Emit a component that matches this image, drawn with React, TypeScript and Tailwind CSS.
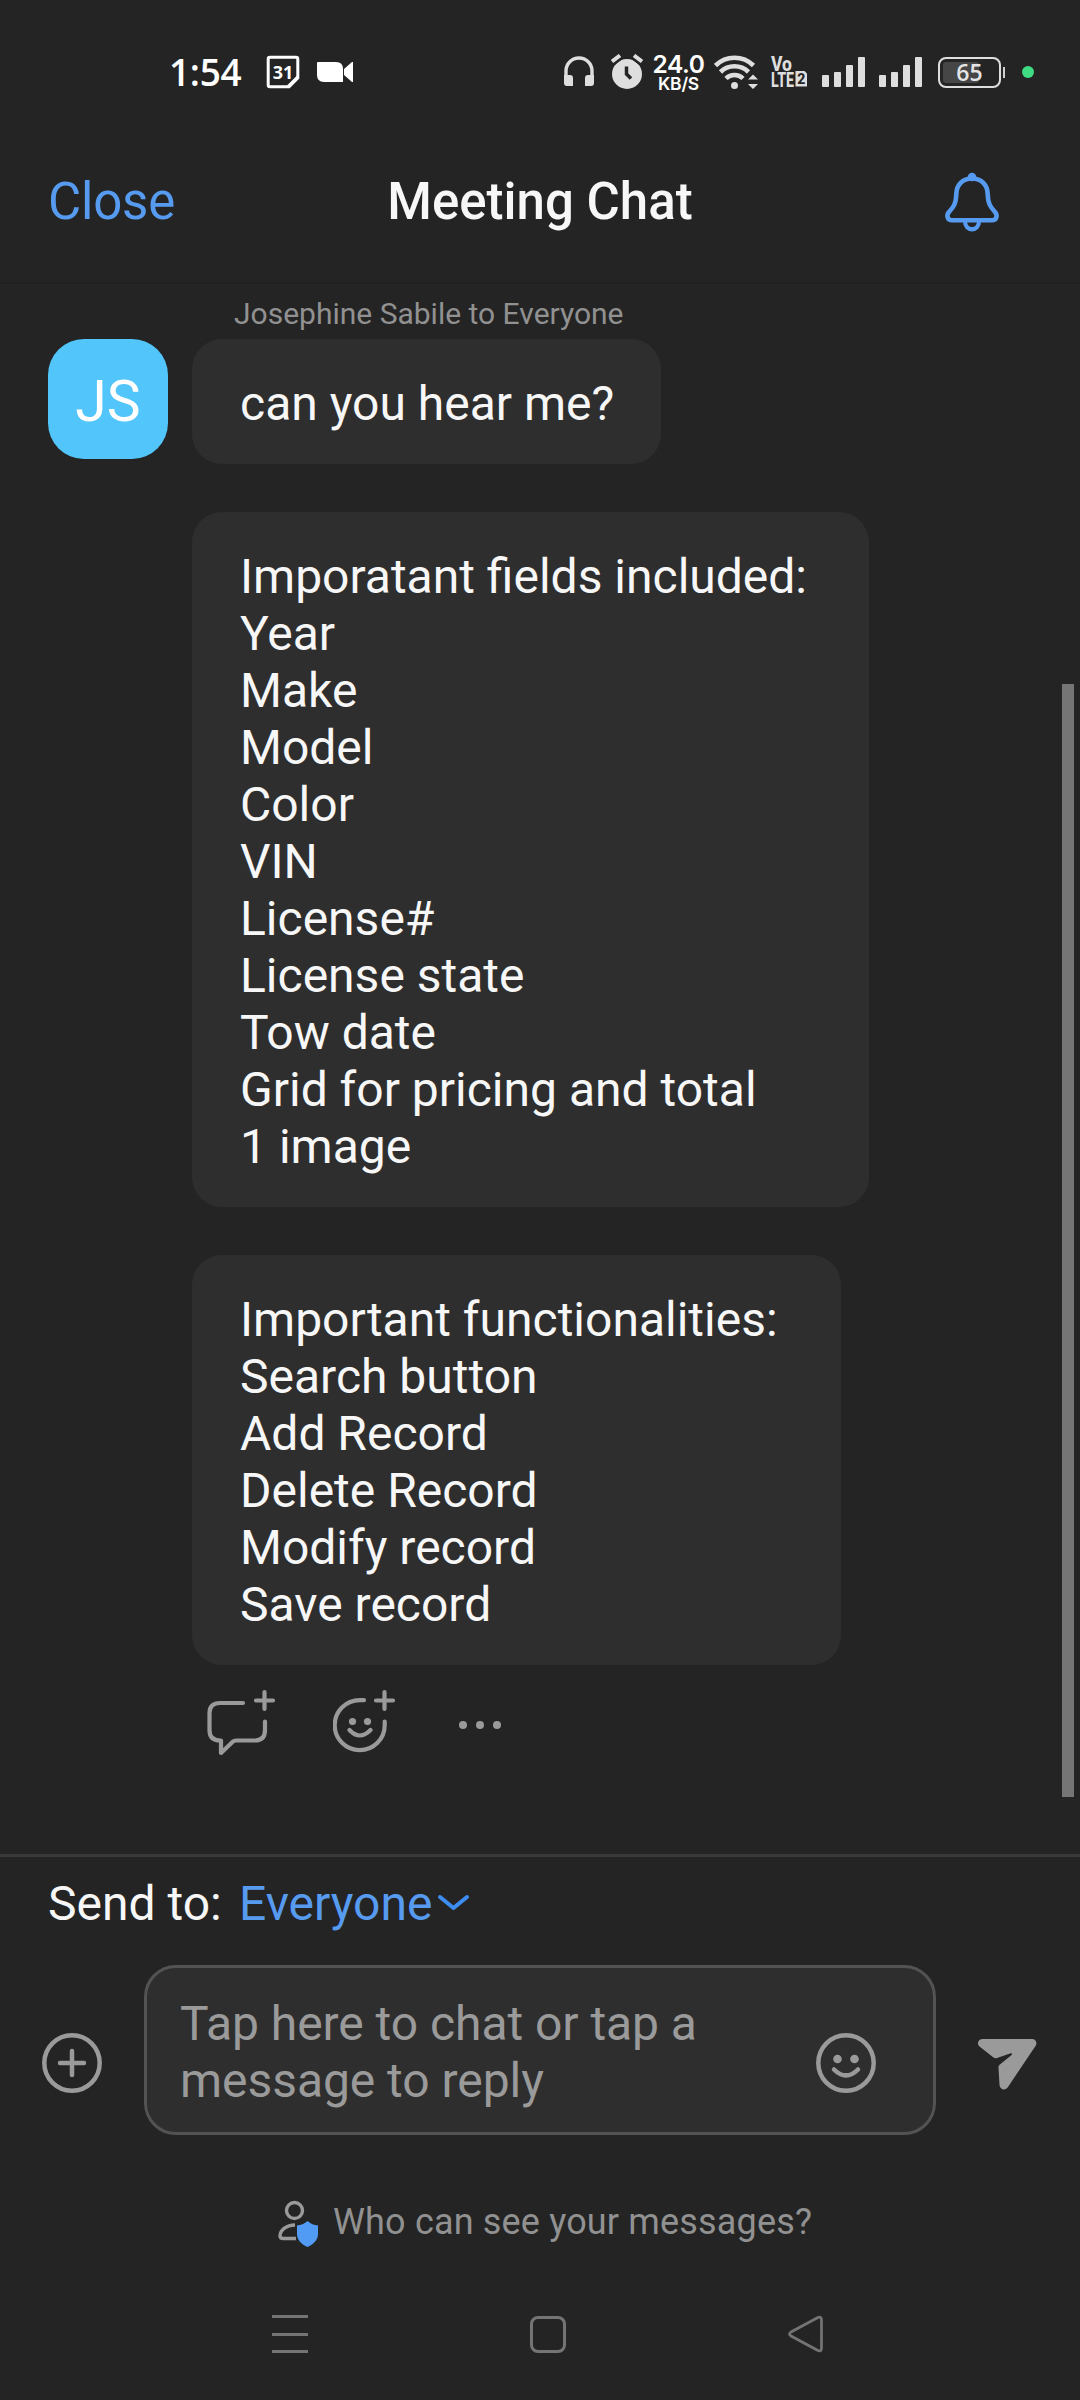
import React from "react";

const TEXT = "font-['Roboto',sans-serif]";

function Bubble({ lines, className }: { lines: string[]; className: string }) {
  return (
    <div className={`rounded-[30px] bg-[#2e2e2e] pl-12 pt-9 text-[48px] leading-[57px] text-[#f7f7f7] ${className}`}>
      {lines.map((l) => (
        <div key={l} className="whitespace-nowrap">{l}</div>
      ))}
    </div>
  );
}

function Signal({ className }: { className: string }) {
  return (
    <div className={`flex h-[30px] w-[43px] items-end justify-between ${className}`}>
      <div className="h-3 w-[7px] rounded-[1px] bg-[#dedede]" />
      <div className="h-[15px] w-[7px] rounded-[1px] bg-[#dedede]" />
      <div className="h-[22px] w-[7px] rounded-[1px] bg-[#dedede]" />
      <div className="h-[30px] w-[7px] rounded-[1px] bg-[#dedede]" />
    </div>
  );
}

function StatusBar() {
  return (
    <header className="flex h-[144px] items-center">
      <div className="ml-[169px] w-[97px] whitespace-nowrap font-['Open_Sans',sans-serif] text-[37px] font-semibold leading-[44px] tracking-[-0.3px] text-white">1:54</div>
      <svg width="34" height="34" viewBox="0 0 34 34" className="shrink-0">
        <path d="M4 2.2H30Q31.8 2.2 31.8 4V23L23 31.8H4Q2.2 31.8 2.2 30V4Q2.2 2.2 4 2.2Z" fill="none" stroke="#fff" strokeWidth="3" />
        <path d="M32 22L22 32" stroke="#fff" strokeWidth="3.5" />
        <text x="17" y="23.500" textAnchor="middle" fontFamily="Open Sans" fontWeight="700" fontSize="18" fill="#fff">31</text>
      </svg>
      <svg width="38" height="22" viewBox="0 0 38 22" className="ml-[16px] shrink-0">
        <path d="M2 1H20Q27 1 27 8V21H8Q1 21 1 14V2Q1 1 2 1ZM28 8L36 1H37V21H36L28 14Z" fill="#fff" />
      </svg>
      <svg width="30" height="32" viewBox="0 0 30 32" className="ml-[210px] shrink-0">
        <path d="M2 22V15A13 13 0 0 1 28 15V22" fill="none" stroke="#dedede" strokeWidth="3.4" />
        <path d="M0 19H6Q9 19 9 22V30H3Q0 30 0 27ZM30 19H24Q21 19 21 22V30H27Q30 30 30 27Z" fill="#dedede" />
      </svg>
      <svg width="32" height="36" viewBox="0 0 32 36" className="ml-[17px] shrink-0">
        <circle cx="16" cy="20" r="15" fill="#dedede" />
        <path d="M1 8L9 2M31 8L23 2" stroke="#242424" strokeWidth="8" />
        <path d="M1 7.500L9 1.500M31 7.500L23 1.500" stroke="#dedede" strokeWidth="4" />
        <path d="M15.500 12.500V20L20 24.500" stroke="#242424" strokeWidth="3.500" fill="none" />
      </svg>
      <div className="ml-[9px] mt-[2px] flex w-[53px] flex-col items-center whitespace-nowrap font-['Inter',sans-serif] text-white">
        <div className="text-[24.5px] font-semibold leading-[22px] tracking-[-0.4px]">24.0</div>
        <div className="text-[17.5px] font-semibold leading-[18px] tracking-[-0.2px]">KB/S</div>
      </div>
      <svg width="46" height="36" viewBox="0 0 46 36" className="ml-[9px] shrink-0">
        <g fill="none" stroke="#dedede" strokeWidth="4.600">
          <path d="M1.500 11.500A27 27 0 0 1 39.500 11.500" />
          <path d="M6.500 18A20 20 0 0 1 34.500 18" />
          <path d="M12 24.500A12 12 0 0 1 29 24.500" />
        </g>
        <circle cx="20.500" cy="31.500" r="3.500" fill="#dedede" />
        <path d="M34 25.500L39 20.500L44 25.500ZM34 30L39 35L44 30Z" fill="#dedede" />
      </svg>
      <svg width="38" height="34" viewBox="0 0 38 34" className="ml-[10px] shrink-0 overflow-visible">
        <g fontFamily="Roboto" fontWeight="800" fill="#dedede">
          <text x="1" y="15.500" fontSize="20" textLength="21" lengthAdjust="spacingAndGlyphs">Vo</text>
          <text x="1" y="31.500" fontSize="19.500" textLength="23" lengthAdjust="spacingAndGlyphs">LTE</text>
        </g>
        <path d="M25.500 16H34.500L37 18.500V31.500H25.500Z" fill="#dedede" />
        <text x="31.200" y="29" textAnchor="middle" fontFamily="Roboto" fontWeight="800" fontSize="14" fill="#242424">2</text>
      </svg>
      <Signal className="ml-[14px]" />
      <Signal className="ml-[14px]" />
      <div className="ml-[16px] flex h-[31px] w-[63px] rounded-[8px] border-2 border-[#dedede] p-[3px]">
        <div className="h-full w-[36px] rounded-[3px] bg-[#464646]">
          <div className="-mt-[2px] w-[53px] text-center font-['Open_Sans',sans-serif] text-[23px] font-semibold leading-[25px] text-[#e4e4e4]">65</div>
        </div>
      </div>
      <div className="ml-[2px] h-[11px] w-[2px] bg-[#cfcfcf]" />
      <div className="ml-[17px] h-3 w-3 rounded-full bg-[#40dc84]" />
    </header>
  );
}

export default function App() {
  return (
    <div className={`flex h-[2400px] w-[1080px] flex-col overflow-hidden bg-[#242424] ${TEXT}`}>
      <StatusBar />
      <nav className="flex h-[140px] items-start justify-between border-b-2 border-[#202020] pl-12 pr-[80px] pt-[29px]">
        <div className="w-[240px] text-[51px] leading-[57px] tracking-[-0.2px] text-[#579bf1]">Close</div>
        <div className="text-[51px] font-medium leading-[57px] text-[#f7f7f7]">Meeting Chat</div>
        <div className="-mt-[2px] flex w-[208px] justify-end">
          <svg width="56" height="62" viewBox="0 0 56 62">
            <path d="M28 7.500C18.500 7.500 12.500 14 12.300 23C12 33 9.500 36 5 41C2 44.500 3.500 49.200 8 49.200H48C52.500 49.200 54 44.500 51 41C46.500 36 44 33 43.700 23C43.500 14 37.500 7.500 28 7.500Z" fill="none" stroke="#579bf1" strokeWidth="4.600" />
            <circle cx="28" cy="6" r="4.200" fill="#579bf1" />
            <path d="M21 50C21 61 35 61 35 50" fill="none" stroke="#579bf1" strokeWidth="4.300" />
          </svg>
        </div>
      </nav>

      <main className="flex h-[1570px] pl-12">
        <div className="mt-[55px] flex h-[120px] w-[120px] items-center justify-center rounded-[36px] bg-[#52c5fa] pt-[5px] text-[57px] text-white">JS</div>
        <div className="ml-6 flex w-[870px] flex-col">
          <div className="h-[55px] pl-[42px] pt-[12px] text-[30px] leading-[36px] text-[#919191]">Josephine Sabile to Everyone</div>
          <Bubble className="h-[125px] w-[469px]" lines={["can you hear me?"]} />
          <Bubble
            className="mt-12 h-[695px] w-[677px]"
            lines={["Imporatant fields included:", "Year", "Make", "Model", "Color", "VIN", "License#", "License state", "Tow date", "Grid for pricing and total", "1 image"]}
          />
          <Bubble
            className="mt-12 h-[410px] w-[649px]"
            lines={["Important functionalities:", "Search button", "Add Record", "Delete Record", "Modify record", "Save record"]}
          />
          <div className="mt-[24px] flex">
            <svg width="71" height="68" viewBox="0 0 71 68" className="ml-[14px]" fill="none" stroke="#9a9a9a" strokeWidth="4.200" strokeLinecap="round" strokeLinejoin="round">
              <path d="M37 14H14Q3.500 14 3.500 24V41Q3.500 51.500 14 51.500H15V64L27 52.500Q28 51.500 30 51.500H49Q59 51.500 59 41V32.500M58.500 3V20M50 11.500H67" />
            </svg>
            <svg width="66" height="68" viewBox="0 0 66 68" className="ml-[56px]" fill="none" stroke="#9a9a9a" strokeWidth="4.200" strokeLinecap="round">
              <path d="M31 11.200H27A25 25 0 1 0 51.700 36V32.500M51.500 3V20M43 11.500H60M16.500 41Q26.700 52 37.500 41" />
              <circle cx="19.500" cy="32.500" r="3.600" fill="#9a9a9a" stroke="none" />
              <circle cx="34.500" cy="32.500" r="3.600" fill="#9a9a9a" stroke="none" />
            </svg>
            <div className="ml-[60px] mt-[32px] flex gap-[9px]">
              <div className="h-2 w-2 rounded-full bg-[#9a9a9a]" />
              <div className="h-2 w-2 rounded-full bg-[#9a9a9a]" />
              <div className="h-2 w-2 rounded-full bg-[#9a9a9a]" />
            </div>
          </div>
        </div>
        <div className="mt-[400px] h-[1113px] w-3 bg-[#757575]" />
      </main>

      <footer className="flex h-[546px] flex-col border-t-[3px] border-[#393939]">
        <div className="flex h-[108px] pl-12 pt-[18px] text-[48px] leading-[57px]">
          <div className="w-[191px] text-[#f7f7f7]">Send to:</div>
          <div className="w-[193px] text-[#579bf1]">Everyone</div>
          <svg width="34" height="20" viewBox="0 0 34 20" className="ml-[5px] mt-[18px]">
            <path d="M3 4L16.500 15L30 4" fill="none" stroke="#3d8df0" strokeWidth="4" strokeLinecap="round" strokeLinejoin="round" />
          </svg>
        </div>
        <div className="flex h-[170px] pl-[42px]">
          <svg width="60" height="60" viewBox="0 0 60 60" className="mt-[68px]" fill="none" stroke="#9a9a9a" strokeWidth="4.500" strokeLinecap="round">
            <circle cx="30" cy="30" r="27.700" />
            <path d="M30 18V42M18 30H42" />
          </svg>
          <div className="ml-[42px] flex w-[792px] rounded-[32px] border-[3px] border-[#535353] bg-[#2e2e2e]">
            <div className="ml-[33px] mt-[27px] w-[635px] text-[48px] leading-[57px] tracking-[-0.05px] text-[#9a9a9a]">
              <div>Tap here to chat or tap a</div>
              <div>message to reply</div>
            </div>
            <svg width="62" height="62" viewBox="0 0 62 62" className="mt-[64px] shrink-0" fill="none" stroke="#9a9a9a" strokeWidth="4.500" strokeLinecap="round">
              <circle cx="31" cy="31" r="27.700" />
              <path d="M19 37.500Q31 49.500 43 37.500" />
              <circle cx="22.500" cy="27" r="4.300" fill="#9a9a9a" stroke="none" />
              <circle cx="39.500" cy="27" r="4.300" fill="#9a9a9a" stroke="none" />
            </svg>
          </div>
          <svg width="60" height="54" viewBox="0 0 60 54" className="ml-[41px] mt-[73px]">
            <path d="M6 1H55C59 1 60.500 5 58.500 8L31 49C28.500 53 23 52 22.500 47L21.500 30C21.400 28 22 27 23.500 26L34 17.500C36 16 35 15 33 15.500L20 20C18.500 20.500 17.500 20.300 16.500 19.500L2.500 8.500C-0.500 6 1 1 6 1Z" fill="#9a9a9a" />
          </svg>
        </div>
        <div className="flex h-[125px] pl-[276px] pt-[63px]">
          <svg width="44" height="52" viewBox="0 0 44 52" fill="none" stroke="#9a9a9a" strokeWidth="3.400">
            <circle cx="18.500" cy="12.500" r="8" />
            <path d="M19 27C10 27 4 32.500 4 38Q4 40.500 7.500 40.500H20" />
            <path d="M31.500 23Q36 27 42 27.500V36C42 42 37.500 46.500 31.500 49C25.500 46.500 21 42 21 36V27.500Q27 27 31.500 23Z" fill="#519bf5" stroke="none" />
          </svg>
          <div className="ml-[13px] mt-[3px] whitespace-nowrap text-[36px] leading-[43px] tracking-[0.17px] text-[#919191]">Who can see your messages?</div>
        </div>
        <div className="mt-[55px] flex items-center pl-[272px]">
          <div className="flex h-[38px] w-[36px] flex-col justify-between">
            <div className="h-[3px] bg-[#747474]" />
            <div className="h-[3px] bg-[#747474]" />
            <div className="h-[3px] bg-[#747474]" />
          </div>
          <div className="ml-[222px] h-[37px] w-[36px] rounded-[8px] border-[3px] border-[#747474]" />
          <svg width="38" height="38" viewBox="0 0 38 38" className="ml-[221px]">
            <path d="M30 3Q34.500 0.500 34.500 5V33Q34.500 37.500 30 35L4 21Q1 19 4 17Z" fill="none" stroke="#747474" strokeWidth="2.700" />
          </svg>
        </div>
      </footer>
    </div>
  );
}
